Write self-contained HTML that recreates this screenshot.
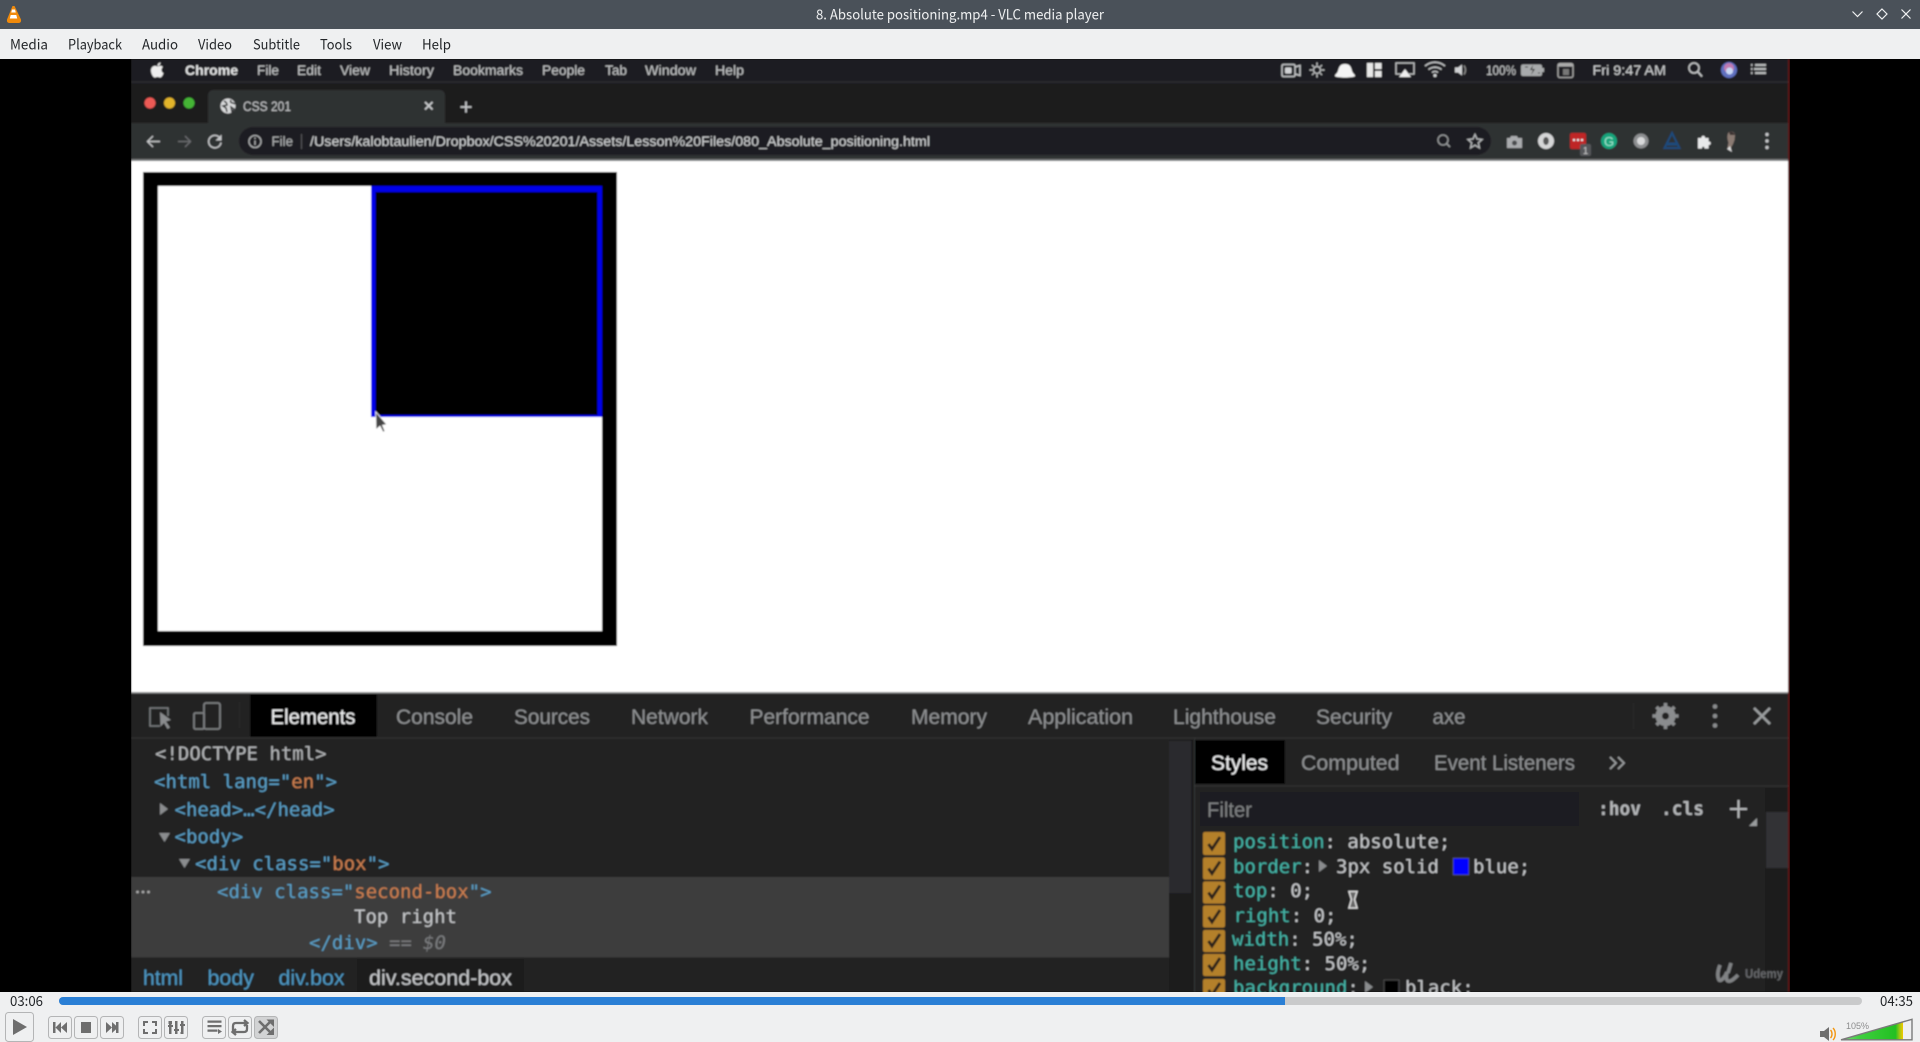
<!DOCTYPE html>
<html lang="en"><head><meta charset="utf-8"><title>8. Absolute positioning.mp4 - VLC media player</title>
<style>
html,body{margin:0;padding:0;width:1920px;height:1042px;overflow:hidden;background:#eff0f1}
svg{display:block;position:absolute;left:0;top:0}
.v{font-family:"Noto Sans CJK SC","Liberation Sans",sans-serif;font-size:14px;fill:#232629}
.m{font-family:"Liberation Sans",sans-serif;font-size:13.5px;fill:#c4c6c8}
.d{font-family:"Liberation Sans",sans-serif;font-size:21px;fill:#8f9193}
.c{font-family:"DejaVu Sans Mono","Liberation Mono",monospace;font-size:19px;fill:#b4b6b8;white-space:pre}
.t{fill:#5a9fc6}.o{fill:#cd7f4f}.a{fill:#45b5a8}.g{fill:#c6c8ca}
</style></head><body>
<svg width="1920" height="1042" viewBox="0 0 1920 1042" xmlns="http://www.w3.org/2000/svg">
<defs>
<filter id="b" x="0" y="0" width="100%" height="100%"><feGaussianBlur stdDeviation="0.85"/></filter>
<clipPath id="vc"><rect x="0" y="59" width="1920" height="933"/></clipPath>
</defs>
<rect width="1920" height="1042" fill="#eff0f1"/>
<rect width="1920" height="29" fill="#4a5159"/>
<path d="M14.500 6l-2 0-5.500 13.500q-.5 3 2 3.500h10q2.500-.5 2-3.500z" fill="#f08a0c"/>
<path d="M12 9.500h3l.8 3h-4.600zM10.700 15h5.600l.9 3.500h-7.400z" fill="#fff"/>
<text class="v" x="816" y="19.500" textLength="288" lengthAdjust="spacingAndGlyphs" style="fill:#eff0f1">8. Absolute positioning.mp4 - VLC media player</text>
<g fill="none" stroke="#eff0f1" stroke-width="1.200">
<path d="M1852.500 11.500l5 5 5-5"/><path d="M1882 9l5 5-5 5-5-5z"/><path d="M1901.500 9.500l9 9M1910.500 9.500l-9 9"/>
</g>
<text class="v" x="10" y="49.500" textLength="38" lengthAdjust="spacingAndGlyphs">Media</text>
<text class="v" x="68" y="49.500" textLength="54" lengthAdjust="spacingAndGlyphs">Playback</text>
<text class="v" x="142" y="49.500" textLength="36" lengthAdjust="spacingAndGlyphs">Audio</text>
<text class="v" x="198" y="49.500" textLength="34" lengthAdjust="spacingAndGlyphs">Video</text>
<text class="v" x="253" y="49.500" textLength="47" lengthAdjust="spacingAndGlyphs">Subtitle</text>
<text class="v" x="320" y="49.500" textLength="32" lengthAdjust="spacingAndGlyphs">Tools</text>
<text class="v" x="373" y="49.500" textLength="29" lengthAdjust="spacingAndGlyphs">View</text>
<text class="v" x="422" y="49.500" textLength="29" lengthAdjust="spacingAndGlyphs">Help</text>

<rect y="59" width="1920" height="933" fill="#000"/>
<g clip-path="url(#vc)"><g filter="url(#b)">
<rect x="131" y="59" width="1658" height="933" fill="#212223"/>
<rect x="1788" y="59" width="2" height="933" fill="#5a1414"/>
<!-- mac menu -->
<rect x="131" y="59" width="1657" height="22" fill="#1d1e20"/>
<path d="M158 66.500c1.500-.8 3.500-.8 4.500 0 .8.500-1.500 2-1 4 .2 1.500 1.500 2.500 2 2.500-.5 2-2 4.500-3.500 4.500-1 0-1.500-.6-2.500-.6s-1.500.6-2.500.6c-2 0-4-4-4-7 0-3.500 3-5 4.700-4.500zM157.500 66c0-2 1.500-3.500 3-3.500 0 2-1.500 3.500-3 3.500z" fill="#eee"/>
<text class="m" x="185" y="75" textLength="53" lengthAdjust="spacingAndGlyphs" font-weight="700" style="fill:#e4e5e6">Chrome</text>
<text class="m" x="257" y="75" textLength="22" lengthAdjust="spacingAndGlyphs">File</text>
<text class="m" x="297" y="75" textLength="24" lengthAdjust="spacingAndGlyphs">Edit</text>
<text class="m" x="340" y="75" textLength="30" lengthAdjust="spacingAndGlyphs">View</text>
<text class="m" x="389" y="75" textLength="45" lengthAdjust="spacingAndGlyphs">History</text>
<text class="m" x="453" y="75" textLength="70" lengthAdjust="spacingAndGlyphs">Bookmarks</text>
<text class="m" x="542" y="75" textLength="43" lengthAdjust="spacingAndGlyphs">People</text>
<text class="m" x="605" y="75" textLength="22" lengthAdjust="spacingAndGlyphs">Tab</text>
<text class="m" x="645" y="75" textLength="51" lengthAdjust="spacingAndGlyphs">Window</text>
<text class="m" x="715" y="75" textLength="29" lengthAdjust="spacingAndGlyphs">Help</text>
<!-- mac right -->
<g fill="#d0d2d4" stroke="none">
<rect x="1282" y="64.500" width="13" height="12" rx="1.500" fill="none" stroke="#c4c6c8" stroke-width="1.500"/><path d="M1295 67l5-1.500v10l-5-1.500" fill="none" stroke="#c4c6c8" stroke-width="1.500"/><rect x="1285" y="67.500" width="6.500" height="6" rx="1" fill="#d0d2d4"/>
<circle cx="1317" cy="70" r="3.500" fill="none" stroke="#c4c6c8" stroke-width="1.300"/>
<path d="M1317 62.500v3M1317 74.500v3M1309.500 70h3M1321.500 70h3M1312 65l2 2M1320 73l2 2M1322 65l-2 2M1314 73l-2 2" stroke="#c4c6c8" stroke-width="1.200" fill="none"/>
<path d="M1335 76c0-2 2-2 3-5 1-4 2-7 7-7s6 3 7 7c1 3 3 3 3 5 0 2-20 2-20 0z" fill="#f4f4f4"/>
<rect x="1367" y="63" width="6" height="14" fill="#e8e8e8"/><rect x="1375" y="63" width="6.500" height="6" fill="#e8e8e8"/><rect x="1375" y="71" width="6.500" height="6" fill="#e8e8e8"/>
<path d="M1401 74h-5v-11h18v11h-5" fill="none" stroke="#c4c6c8" stroke-width="1.300"/><path d="M1405 69l6 8h-12z" fill="#eee"/>
<path d="M1425 66c6-5 14-5 20 0M1428.500 69.500c4-3 9-3 13 0M1432 72.500c2-1.500 4-1.500 6 0" fill="none" stroke="#c4c6c8" stroke-width="1.500"/><circle cx="1435" cy="75.500" r="1.600"/>
<path d="M1455 67.500h3l4-3v11l-4-3h-3z"/><path d="M1464 65.500q3 4.500 0 9" fill="none" stroke="#888" stroke-width="1.500"/>
<text class="m" x="1486" y="75" textLength="30" lengthAdjust="spacingAndGlyphs">100%</text>
<rect x="1521" y="64.500" width="21" height="11.500" rx="2" fill="#a8aaac"/><rect x="1542" y="68" width="2" height="4" fill="#a8aaac"/><path d="M1533 65l-3 5h3l-2 5 4-6h-3z" fill="#222"/><path d="M1525 67h3M1538 73h2" stroke="#333" stroke-width="1"/>
<rect x="1558" y="63.500" width="15" height="14" rx="2" fill="none" stroke="#aaa" stroke-width="1.300"/><rect x="1558" y="63.500" width="15" height="3" fill="#aaa"/><rect x="1563" y="69" width="6" height="6" fill="#777"/>
<text class="m" x="1592.500" y="75" textLength="73.500" lengthAdjust="spacingAndGlyphs" style="fill:#d0d2d4">Fri 9:47 AM</text>
<circle cx="1694" cy="68" r="5" fill="none" stroke="#c4c6c8" stroke-width="1.500"/><path d="M1698 72l4 4.500" stroke="#c4c6c8" stroke-width="1.700"/>
<circle cx="1729" cy="70" r="8" fill="#5f6fc0"/><circle cx="1729" cy="68" r="5" fill="#c07ab0"/><circle cx="1729.500" cy="71" r="3.500" fill="#c9d8f5"/>
<path d="M1755 65h11M1754 69h12M1755 73h11M1751 65h1.500M1751 69h1.500M1751 73h1.500" stroke="#b8babc" stroke-width="2.200" fill="none"/>
</g>
<!-- tab strip -->
<path d="M131 85q0-4 4-4h1649q4 0 4 4v38h-1657z" fill="#1c1d1f"/>
<rect x="131" y="81" width="1657" height="2" fill="#2a2b2e"/>
<path d="M208 123v-27q0-6 6-6h225q6 0 6 6v27z" fill="#2e3033"/>
<circle cx="150" cy="103" r="5.500" fill="#ec5a54"/><circle cx="169.500" cy="103" r="5.500" fill="#e2b42c"/><circle cx="189" cy="103" r="5.500" fill="#45b536"/>
<circle cx="228" cy="106" r="7.500" fill="#d8d9da"/><path d="M224 101c2 1 3 2 3 4l-4 1 3 2 1 4M231 100c-1 2 0 3 2 3l2 1M231 107l3 2-2 3z" stroke="#2e3033" stroke-width="1.500" fill="none"/>
<text class="m" x="243" y="111" textLength="48" lengthAdjust="spacingAndGlyphs" style="fill:#c4c6c8">CSS 201</text>
<path d="M425 102l7.500 7.500M432.500 102l-7.500 7.500" stroke="#c8cacc" stroke-width="1.800"/>
<path d="M466 101.500v11M460.500 107h11" stroke="#c4c6c8" stroke-width="1.800"/>
<!-- toolbar -->
<rect x="131" y="123" width="1657" height="37" fill="#2e3033"/>
<rect x="239" y="127" width="1252" height="28" rx="14" fill="#1e1f22"/>
<path d="M160 141.500h-12M153 136l-5.500 5.500 5.500 5.500" fill="none" stroke="#c4c6c8" stroke-width="1.400"/>
<path d="M178 141.500h12M185 136l5.500 5.500-5.500 5.500" fill="none" stroke="#6a6c6e" stroke-width="1.400"/>
<path d="M220.500 139a6.200 6.200 0 1 0 .5 3.500" fill="none" stroke="#c4c6c8" stroke-width="1.500"/><path d="M221.500 134.500v6h-6z" fill="#c4c6c8"/>
<circle cx="255" cy="141.500" r="6" fill="none" stroke="#b0b2b4" stroke-width="1.300"/><path d="M255 140.500v4.500M255 137.500v1.500" stroke="#b0b2b4" stroke-width="1.300"/>
<text class="m" x="271.500" y="146" textLength="21.500" lengthAdjust="spacingAndGlyphs" style="fill:#b0b2b4">File</text>
<rect x="301" y="134" width="1" height="15" fill="#55575a"/>
<text class="m" x="310" y="146" textLength="620" lengthAdjust="spacingAndGlyphs" style="fill:#d2d4d6">/Users/kalobtaulien/Dropbox/CSS%20201/Assets/Lesson%20Files/080_Absolute_positioning.html</text>
<circle cx="1443" cy="140" r="5" fill="none" stroke="#9a9c9e" stroke-width="1.300"/><path d="M1446.500 143.500l3.500 3.500" stroke="#9a9c9e" stroke-width="1.500"/>
<path d="M1475 134.500l2 4.500 5 .5-3.700 3.300 1.100 5-4.400-2.600-4.400 2.600 1.100-5-3.700-3.300 5-.5z" fill="none" stroke="#b4b6b8" stroke-width="1.400"/>
<path d="M1507 138h3l1-2h6l1 2h4v10h-15z" fill="#a9abad"/><circle cx="1514.500" cy="143" r="2.500" fill="#4a4c4e"/>
<circle cx="1546" cy="141" r="8" fill="#d5d6d7"/><ellipse cx="1546" cy="141" rx="2.800" ry="4" fill="#555"/>
<rect x="1570" y="133" width="16" height="16" rx="2" fill="#bf2626"/><path d="M1573 139h2v2h-2zM1577 139h2v2h-2zM1581 139h2v2h-2z" fill="#eee"/>
<rect x="1580" y="144" width="11" height="12" rx="2" fill="#55575a"/><text x="1585.500" y="154" text-anchor="middle" font-family="Liberation Sans,sans-serif" font-size="10" fill="#ccc">1</text>
<circle cx="1609" cy="141" r="8" fill="#13a47b"/><text x="1609" y="146" text-anchor="middle" font-family="Liberation Sans,sans-serif" font-size="13" fill="#9fe6cf">G</text>
<circle cx="1641" cy="141" r="7.500" fill="#8d8f91"/><circle cx="1641" cy="141" r="4" fill="#d8d9da"/>
<path d="M1672 133l7.500 15h-15z" fill="none" stroke="#1d4a7a" stroke-width="2"/><path d="M1667 144h10" stroke="#1d4a7a" stroke-width="3"/>
<path d="M1698 138h3.500c-.5-3 4-3 3.500 0h3.500v3.500c3-.5 3 4 0 3.500v3.500h-4c.5-2.500-3-2.500-2.500 0h-4z" fill="#e8e9ea"/>
<path d="M1729 132c3-1 6 0 6 3.500l-.5 4.500c-1 3-2 5.500-3 6.500l-1 4-3-3 1-5c-1.500-4-1.500-8.500.5-10.500z" fill="#8a7a72"/><path d="M1727 149l3-3 2 6z" fill="#ddd"/><path d="M1729 132c2-1 5 0 6 3l-5 0z" fill="#3a3030"/>
<circle cx="1767" cy="134.500" r="1.700" fill="#c4c6c8"/><circle cx="1767" cy="141" r="1.700" fill="#c4c6c8"/><circle cx="1767" cy="147.500" r="1.700" fill="#c4c6c8"/>
<rect x="131" y="159" width="1657" height="2" fill="#77787a"/>
<!-- page -->
<rect x="131" y="161" width="1657" height="531" fill="#fff"/>
<rect x="143" y="172" width="474" height="474" fill="#000"/>
<rect x="158" y="186" width="444" height="445" fill="#fff"/>
<rect x="371" y="186" width="231" height="231" fill="#0000e8"/>
<rect x="375.500" y="192" width="222" height="223" fill="#000"/>
<!-- devtools -->
<rect x="131" y="692" width="1657" height="300" fill="#212223"/>
<rect x="131" y="692" width="1657" height="1.500" fill="#8a8b8c"/>
<rect x="131" y="737" width="1657" height="2" fill="#2d2e2f"/>
<rect x="250" y="694" width="127" height="43" fill="#000"/>
<path d="M160 726h-10v-18h18v8" fill="none" stroke="#7c7e80" stroke-width="1.500"/><path d="M160 712l11 8-5 1.500 4 6-2.500 1.500-3.500-6-3.500 3.500z" fill="#8a8c8e"/>
<rect x="204" y="703" width="16" height="26" rx="2" fill="none" stroke="#7c7e80" stroke-width="1.800"/><rect x="194" y="713" width="10" height="16" rx="1.500" fill="#212223" stroke="#7c7e80" stroke-width="1.800"/>
<rect x="239" y="702" width="1" height="26" fill="#2d2e2f"/>
<text class="d" x="270.500" y="724" textLength="85" lengthAdjust="spacingAndGlyphs" style="fill:#f0f1f2">Elements</text>
<text class="d" x="396" y="724" textLength="77" lengthAdjust="spacingAndGlyphs">Console</text>
<text class="d" x="514" y="724" textLength="76" lengthAdjust="spacingAndGlyphs">Sources</text>
<text class="d" x="631" y="724" textLength="77" lengthAdjust="spacingAndGlyphs">Network</text>
<text class="d" x="749.500" y="724" textLength="120" lengthAdjust="spacingAndGlyphs">Performance</text>
<text class="d" x="911" y="724" textLength="76" lengthAdjust="spacingAndGlyphs">Memory</text>
<text class="d" x="1028" y="724" textLength="105" lengthAdjust="spacingAndGlyphs">Application</text>
<text class="d" x="1173" y="724" textLength="103" lengthAdjust="spacingAndGlyphs">Lighthouse</text>
<text class="d" x="1316" y="724" textLength="76" lengthAdjust="spacingAndGlyphs">Security</text>
<text class="d" x="1432.500" y="724" textLength="33" lengthAdjust="spacingAndGlyphs">axe</text>
<rect x="1633" y="703" width="1" height="26" fill="#2d2e2f"/>
<circle cx="1665.500" cy="716" r="7.500" fill="none" stroke="#8a8c8e" stroke-width="5"/>
<path d="M1665.500 703v26M1652.500 716h26M1656.500 707l18 18M1674.500 707l-18 18" stroke="#8a8c8e" stroke-width="3.500"/>
<circle cx="1665.500" cy="716" r="3.500" fill="#212223"/>
<circle cx="1715" cy="706.500" r="2.300" fill="#8a8c8e"/><circle cx="1715" cy="716" r="2.300" fill="#8a8c8e"/><circle cx="1715" cy="725.500" r="2.300" fill="#8a8c8e"/>
<path d="M1754 708l16 16M1770 708l-16 16" stroke="#9a9c9e" stroke-width="2.600"/>
<!-- tree -->
<rect x="1169" y="739" width="25" height="253" fill="#1c1d1e"/>
<rect x="1169" y="741" width="22" height="152" fill="#2b2c2d"/>
<rect x="131" y="877" width="1038" height="80" fill="#3c3d3e"/>
<rect x="1194" y="739" width="1" height="253" fill="#363738"/>
<text class="c" x="155" y="760">&lt;!DOCTYPE html&gt;</text>
<text class="c t" x="154" y="788">&lt;html lang="<tspan class="o">en</tspan>"&gt;</text>
<path d="M160 803l8 6-8 6z" fill="#8a8c8e"/>
<text class="c t" x="174.500" y="816">&lt;head&gt;…&lt;/head&gt;</text>
<path d="M159 833h11l-5.500 9z" fill="#8a8c8e"/>
<text class="c t" x="174.500" y="843">&lt;body&gt;</text>
<path d="M179 859h11l-5.500 9z" fill="#8a8c8e"/>
<text class="c t" x="195" y="870">&lt;div class="<tspan class="o">box</tspan>"&gt;</text>
<circle cx="137.500" cy="892" r="1.400" fill="#aaa"/><circle cx="143" cy="892" r="1.400" fill="#aaa"/><circle cx="148.500" cy="892" r="1.400" fill="#aaa"/>
<text class="c t" x="217" y="898">&lt;div class="<tspan class="o">second-box</tspan>"&gt;</text>
<text class="c g" x="354" y="923">Top right</text>
<text class="c t" x="309" y="949">&lt;/div&gt;</text>
<text class="c" x="389" y="949" style="fill:#7a7c7e">==</text>
<text class="c" x="423" y="949" font-style="italic" style="fill:#7a7c7e">$0</text>
<rect x="131" y="957" width="1038" height="1" fill="#2d2e2f"/>
<rect x="357" y="958" width="167" height="34" fill="#1d1e1f"/>
<text class="d" x="143" y="985" textLength="40" lengthAdjust="spacingAndGlyphs" style="fill:#4d97c2">html</text>
<text class="d" x="207.500" y="985" textLength="46.500" lengthAdjust="spacingAndGlyphs" style="fill:#4d97c2">body</text>
<text class="d" x="278.500" y="985" textLength="66" lengthAdjust="spacingAndGlyphs" style="fill:#4d97c2">div.box</text>
<text class="d" x="369" y="985" textLength="143" lengthAdjust="spacingAndGlyphs" style="fill:#c6c8ca">div.second-box</text>
<!-- sidebar -->
<rect x="1195" y="740" width="90" height="44" fill="#000"/>
<rect x="1195" y="785" width="593" height="2" fill="#2d2e2f"/>
<text class="d" x="1211" y="770" textLength="57" lengthAdjust="spacingAndGlyphs" style="fill:#f0f1f2">Styles</text>
<text class="d" x="1301" y="770" textLength="98.500" lengthAdjust="spacingAndGlyphs">Computed</text>
<text class="d" x="1434" y="770" textLength="141" lengthAdjust="spacingAndGlyphs">Event Listeners</text>
<path d="M1610 757l6 6-6 6M1618 757l6 6-6 6" fill="none" stroke="#9a9c9e" stroke-width="1.800"/>
<rect x="1200" y="792" width="379" height="34" fill="#1e1f20"/>
<text class="d" x="1207" y="817" textLength="45" lengthAdjust="spacingAndGlyphs" style="fill:#7f8183">Filter</text>
<text class="c" x="1598" y="815" font-weight="700" textLength="43" lengthAdjust="spacingAndGlyphs">:hov</text>
<text class="c" x="1661" y="815" font-weight="700" textLength="43" lengthAdjust="spacingAndGlyphs">.cls</text>
<path d="M1738.500 800v18M1730 809h17" stroke="#b4b6b8" stroke-width="2"/>
<path d="M1757 818v8h-8z" fill="#9a9c9e"/>
<rect x="1765" y="787" width="23" height="205" fill="#1c1d1e"/>
<rect x="1766" y="812" width="22" height="56" fill="#323334"/>
<g fill="#b4802c">
<rect x="1203" y="832" width="22" height="23" rx="2"/><rect x="1203" y="857.500" width="22" height="22" rx="2"/><rect x="1203" y="881.500" width="22" height="22" rx="2"/><rect x="1203" y="905.500" width="22" height="22" rx="2"/><rect x="1203" y="930" width="22" height="22" rx="2"/><rect x="1203" y="954" width="22" height="22" rx="2"/><rect x="1203" y="979" width="22" height="22" rx="2"/>
</g>
<g fill="none" stroke="#2a241a" stroke-width="2.900">
<path d="M1208.500 844l3.500 5 8-12M1208.500 868.500l3.500 5 8-12M1208.500 892.500l3.500 5 8-12M1208.500 917l3.500 5 8-12M1208.500 941l3.500 5 8-12M1208.500 965l3.500 5 8-12M1208.500 990l3.500 5 8-12"/>
</g>
<text class="c a" x="1233" y="848">position<tspan class="g">: absolute;</tspan></text>
<text class="c a" x="1233" y="873">border<tspan class="g">:</tspan></text>
<path d="M1319 860l8 6-8 6z" fill="#8a8c8e"/>
<text class="c g" x="1336" y="873">3px solid</text>
<rect x="1453" y="858" width="16" height="17" fill="#0000ff" stroke="#555" stroke-width=".8"/>
<text class="c g" x="1473" y="873">blue;</text>
<text class="c a" x="1233" y="897">top<tspan class="g">: 0;</tspan></text>
<text class="c a" x="1233.500" y="922">right<tspan class="g">: 0;</tspan></text>
<text class="c a" x="1232" y="945.500">width<tspan class="g">: 50%;</tspan></text>
<text class="c a" x="1233" y="970">height<tspan class="g">: 50%;</tspan></text>
<text class="c a" x="1233" y="994">background<tspan class="g">:</tspan></text>
<path d="M1365 981l8 6-8 6z" fill="#8a8c8e"/>
<rect x="1384" y="980" width="15" height="16" fill="#000" stroke="#555" stroke-width=".8"/>
<text class="c g" x="1405" y="994">black;</text>
<path d="M1349 891.500h8l-2.500 8 2.500 8.500h-8l2.500-8.500z" fill="#666" stroke="#ddd" stroke-width="1.500"/>
<path d="M1720 965c-2 5-3 11-1 15 2 2 6-3 8-8-1 4-1 8 1 9 3 1 7-3 10-6" fill="none" stroke="#808284" stroke-width="3.600"/>
<path d="M1731 963l-3 10" stroke="#808284" stroke-width="3.600"/>
<text x="1745" y="978" font-family="Liberation Sans,sans-serif" font-size="13" font-weight="700" fill="#66686a" textLength="38" lengthAdjust="spacingAndGlyphs">Udemy</text>
<!-- cursor -->
<path d="M375.700 411.700l11.300 13-4.500.5 2.500 6-2 1-3-6-4 3.500z" fill="#444" stroke="#fff" stroke-width=".8"/>
</g></g>

<!-- controls -->
<rect y="992" width="1920" height="50" fill="#eff0f1"/>
<text class="v" x="10" y="1006" textLength="33" lengthAdjust="spacingAndGlyphs">03:06</text>
<rect x="59" y="997" width="1803" height="8" rx="4" fill="#c9cacb"/>
<path d="M63 997h1222v8h-1222a4 4 0 0 1 0-8z" fill="#2a7fd5"/>
<text class="v" x="1880" y="1006" textLength="33" lengthAdjust="spacingAndGlyphs">04:35</text>
<g fill="#eff0f1" stroke="#b4b5b6" stroke-width="1">
<rect x="5.500" y="1012.500" width="28" height="29" rx="3"/>
<rect x="48.500" y="1016.500" width="23" height="22" rx="3"/><rect x="74.500" y="1016.500" width="23" height="22" rx="3"/><rect x="100.500" y="1016.500" width="23" height="22" rx="3"/>
<rect x="138.500" y="1016.500" width="23" height="22" rx="3"/><rect x="164.500" y="1016.500" width="23" height="22" rx="3"/>
<rect x="202.500" y="1016.500" width="23" height="22" rx="3"/><rect x="228.500" y="1016.500" width="23" height="22" rx="3"/>
<rect x="254.500" y="1016.500" width="23" height="22" rx="3" fill="#d2d3d4"/>
</g>
<g fill="#6e6e6e">
<path d="M13 1019l14 8-14 8z"/>
<path d="M53 1022h2.500v11h-2.500zM61 1022v11l-5.500-5.500zM67 1022v11l-6-5.500z"/>
<rect x="81" y="1022" width="10" height="11"/>
<path d="M106 1022l6 5.500-6 5.500zM112 1022l6 5.500-6 5.500zM116 1022h2.500v11h-2.500z"/>
<path d="M143 1021h5v2h-3v3h-2zM152 1021h5v5h-2v-3h-3zM143 1029h2v3h3v2h-5zM155 1029h2v5h-5v-2h3z"/>
<path d="M169 1024h2.500v10h-2.500zM175 1021h2.500v13h-2.500zM181 1021h2.500v13h-2.500z"/><path d="M168 1025h5v2h-5zM174 1029h5v2h-5zM180 1024h5v2h-5zM168.500 1021h3.500v3h-3.500zM180.500 1032h3v2h-3z"/>
<path d="M207.500 1020.500h14v2.200h-14zM207.500 1025h14v2.200h-14zM207.500 1029.500h10v2.200h-10zM218 1029l4 2.500-4 2.500z"/>
</g>
<g fill="none" stroke="#6e6e6e" stroke-width="2.300">
<path d="M233 1031v-5q0-3 3-3h11M244 1020l3.500 3-3.500 3" />
<path d="M247 1025v4q0 3-3 3h-11M236 1029l-3.500 3 3.500 3"/>
<path d="M259 1021l12 12M259 1033l12-12" stroke-width="2.600"/>
</g>
<path d="M266.500 1019.500h7.500v7.500zM274 1027.500v7.500h-7.500z" fill="#6e6e6e"/>
<path d="M1820 1031h4l5-4v14l-5-4h-4z" fill="#6e6e6e"/>
<path d="M1830.500 1030c2 2 2 6 0 8M1833 1028c3 3 3 9 0 12" fill="none" stroke="#f2950f" stroke-width="1.400"/>
<text x="1846" y="1029" font-family="Liberation Sans,sans-serif" font-size="9.500" fill="#8b8c8d" textLength="23" lengthAdjust="spacingAndGlyphs">105%</text>
<defs><linearGradient id="vg" x1="0" x2="1" y1="0" y2="0"><stop offset="0" stop-color="#7fdc7f"/><stop offset=".3" stop-color="#3fcf3f"/><stop offset=".88" stop-color="#22c022"/><stop offset=".95" stop-color="#a8c811"/><stop offset="1" stop-color="#f0c800"/></linearGradient></defs>
<path d="M1841 1039.500l62-18v18z" fill="url(#vg)"/>
<path d="M1841 1039.800l71-20.500v20.500z" fill="none" stroke="#7a7a7a" stroke-width="1.400"/>
</svg>
</body></html>
